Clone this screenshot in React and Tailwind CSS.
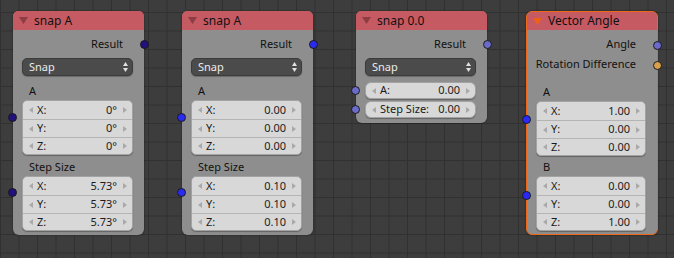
import React from "react";

const FONT = "font-['Noto_Sans','DejaVu_Sans',sans-serif]";

function Arrow({ dir = "left", className = "" }) {
    return (
        <svg width="4" height="6" viewBox="0 0 4 6" className={className}>
            {dir === "left" ? (
                <path d="M4 0 L0 3 L4 6 Z" fill="#a9a9a9" />
            ) : (
                <path d="M0 0 L4 3 L0 6 Z" fill="#a9a9a9" />
            )}
        </svg>
    );
}

function Socket({ side, top, color }) {
    return (
        <span
            className={`absolute w-[9px] h-[9px] rounded-full border border-[#1a1a1a] ${side === "left" ? "left-[-5px]" : "right-[-5px]"}`}
            style={{ top: top - 4.5, backgroundColor: color }}
        />
    );
}

function FieldRow({ label, value, first, h = "h-[18px]" }) {
    return (
        <div className={`flex items-center ${h} pl-[6px] pr-[5px] ${first ? "" : "border-t border-[#b4b4b4]"}`}>
            <Arrow dir="left" />
            <span className="ml-[4px] text-[#1b1b1b] whitespace-nowrap">{label}</span>
            <span className="flex-1" />
            <span className="text-[#1b1b1b] mr-[6px]">{value}</span>
            <Arrow dir="right" />
        </div>
    );
}

function VectorBox({ rows }) {
    return (
        <div className="mr-[2px] rounded-[5px] bg-[#d8d8d8] border border-[#a3a3a3] shadow-[0_1px_1px_rgba(0,0,0,0.3)] overflow-hidden">
            {rows.map((r, i) => (
                <FieldRow key={r[0]} label={r[0]} value={r[1]} first={i === 0} h={i === 2 ? "h-[17px]" : "h-[18px]"} />
            ))}
        </div>
    );
}

function Pill({ label, value }) {
    return (
        <div className="mr-[2px] rounded-[6px] bg-[#d8d8d8] border border-[#a3a3a3] shadow-[0_1px_1px_rgba(0,0,0,0.3)]">
            <FieldRow label={label} value={value} first h="h-[15px]" />
        </div>
    );
}

function Dropdown() {
    return (
        <div className="mt-[4px] mr-[2px] h-[18px] rounded-[5px] bg-[#4b4b4b] border border-[#3b3b3b] flex items-center pl-[6px] pr-[4px] text-[#ececec] shadow-[0_1px_1px_rgba(0,0,0,0.25)]">
            <span>Snap</span>
            <span className="flex-1" />
            <svg width="5" height="10" viewBox="0 0 5 10">
                <path d="M2.5 0 L5 4 L0 4 Z" fill="#e0e0e0" />
                <path d="M0 6 L5 6 L2.5 10 Z" fill="#e0e0e0" />
            </svg>
        </div>
    );
}

function OutRow({ children }) {
    return <div className="h-[20px] flex items-center justify-end pr-[12px] text-[#111] whitespace-nowrap">{children}</div>;
}

function Label({ children, className = "" }) {
    return <div className={`h-[18px] flex items-center pl-[7px] text-[#111] ${className}`}>{children}</div>;
}

function Node({ x, y, w, title, active, sockets, children, className = "" }) {
    return (
        <div
            className={`absolute rounded-[6px] bg-[#8e8e8e] shadow-[0_0_2px_rgba(0,0,0,0.55)] ${active ? "border border-[#f0671a]" : ""}`}
            style={{ left: x, top: y, width: w }}
        >
            <div className={`rounded-t-[5px] bg-[#c65a62] flex items-center pl-[6px] gap-[6px] text-[#111] ${active ? "h-[18px]" : "h-[19px]"}`}>
                <svg width="9" height="7" viewBox="0 0 9 7">
                    <path d="M0 0 L9 0 L4.5 7 Z" fill={active ? "#ee6216" : "#8d3d43"} />
                </svg>
                <span className="text-[12px] leading-none">{title}</span>
            </div>
            <div className={`pl-[9px] pr-[9px] ${className}`}>{children}</div>
            {sockets.map((s, i) => (
                <Socket key={i} {...s} />
            ))}
        </div>
    );
}

function SnapVector({ x, a, step, color }) {
    return (
        <Node
            x={x}
            y={11}
            w={131}
            title="snap A"
            className="pt-[4px] pb-[4px]"
            sockets={[
                { side: "right", top: 33, color },
                { side: "left", top: 106, color },
                { side: "left", top: 181, color },
            ]}
        >
            <OutRow>Result</OutRow>
            <Dropdown />
            <Label className="mt-[6px]">A</Label>
            <VectorBox rows={[["X:", a], ["Y:", a], ["Z:", a]]} />
            <Label className="mt-[3px]">Step Size</Label>
            <VectorBox rows={[["X:", step], ["Y:", step], ["Z:", step]]} />
        </Node>
    );
}

export default function App() {
    return (
        <div
            className={`relative w-[674px] h-[258px] overflow-hidden bg-[#3d3d3d] bg-[linear-gradient(to_right,#313131_1px,transparent_1px),linear-gradient(to_bottom,#313131_1px,transparent_1px)] bg-[size:18.5px_18.5px] bg-[position:0px_12px] text-[11px] ${FONT}`}
        >
            <SnapVector x={13} a="0°" step="5.73°" color="#21117a" />
            <SnapVector x={182} a="0.00" step="0.10" color="#2a2af5" />

            <Node
                x={356}
                y={11}
                w={131}
                title="snap 0.0"
                className="pt-[4px] pb-[5px]"
                sockets={[
                    { side: "right", top: 33, color: "#6a6acb" },
                    { side: "left", top: 79, color: "#6a6acb" },
                    { side: "left", top: 98, color: "#6a6acb" },
                ]}
            >
                <OutRow>Result</OutRow>
                <Dropdown />
                <div className="mt-[6px]">
                    <Pill label="A:" value="0.00" />
                </div>
                <div className="mt-[2px]">
                    <Pill label="Step Size:" value="0.00" />
                </div>
            </Node>

            <Node
                x={526}
                y={11}
                w={132}
                title="Vector Angle"
                active
                className="pt-[4px] pb-[3px]"
                sockets={[
                    { side: "right", top: 33, color: "#6a6acb" },
                    { side: "right", top: 53, color: "#d9a04c" },
                    { side: "left", top: 107, color: "#2a2af5" },
                    { side: "left", top: 183, color: "#2a2af5" },
                ]}
            >
                <OutRow>Angle</OutRow>
                <OutRow>Rotation Difference</OutRow>
                <Label className="mt-[9px]">A</Label>
                <VectorBox rows={[["X:", "1.00"], ["Y:", "0.00"], ["Z:", "0.00"]]} />
                <Label className="mt-[2px]">B</Label>
                <VectorBox rows={[["X:", "0.00"], ["Y:", "0.00"], ["Z:", "1.00"]]} />
            </Node>
        </div>
    );
}
